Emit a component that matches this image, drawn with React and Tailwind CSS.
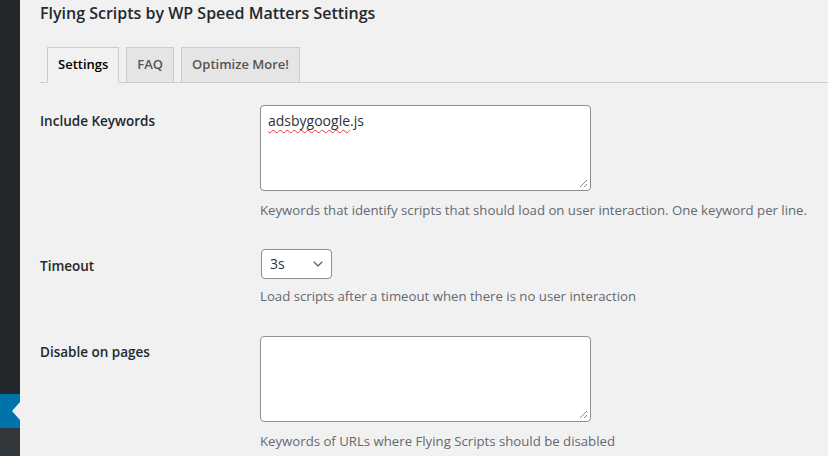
import { ChevronDown } from "lucide-react";

function Grip() {
  return (
    <svg className="absolute right-[2px] bottom-[2px]" width="9" height="9" viewBox="0 0 9 9">
      <path d="M8 1 L1 8 M8 5 L5 8" stroke="#8a8a8a" strokeWidth="1" />
    </svg>
  );
}

function FakeTextarea({ children }) {
  return (
    <div className="relative w-[331px] h-[86px] bg-white border border-[#8c8f94] rounded-[4px] px-[7px] pt-[4px] text-[14px] text-[#2c3338]">
      {children}
      <Grip />
    </div>
  );
}

function Row({ label, top, children, desc, descTop }) {
  return (
    <div className="flex">
      <div className="w-[220px] shrink-0 text-[13.5px] font-semibold text-[#23282d]" style={{ paddingTop: top }}>
        {label}
      </div>
      <div>
        {children}
        <p className="text-[13.2px] text-[#646970]" style={{ marginTop: descTop }}>
          {desc}
        </p>
      </div>
    </div>
  );
}

export default function App() {
  const tabs = ["Settings", "FAQ", "Optimize More!"];

  return (
    <div className="flex w-[828px] h-[456px] overflow-hidden bg-[#f1f1f1] font-['Open_Sans',sans-serif]">
      {/* admin menu strip */}
      <div className="w-[20px] shrink-0 flex flex-col">
        <div className="h-[394px] bg-[#23282d]" />
        <div className="relative h-[34px] bg-[#0073aa]">
          <div className="absolute right-0 top-[8px] w-0 h-0 border-y-[9px] border-y-transparent border-r-[8px] border-r-[#f1f1f1]" />
        </div>
        <div className="flex-1 bg-[#32373c]" />
      </div>

      <div className="flex-1 pl-[20px]">
        <h1 className="mt-[1px] text-[16px] leading-[24px] font-semibold text-[#23282d]">
          Flying Scripts by WP Speed Matters Settings
        </h1>

        {/* tabs */}
        <div className="mt-[22px] flex items-end gap-[7px] pl-[7px] border-b border-[#cccccc] h-[36px]">
          {tabs.map((t, i) => (
            <div
              key={t}
              className={
                i === 0
                  ? "h-[36px] -mb-px px-[10px] border border-[#cccccc] border-b-[#f1f1f1] bg-[#f1f1f1] text-[13px] font-semibold text-[#000] flex items-center"
                  : "h-[35px] px-[10px] border border-b-0 border-[#cccccc] bg-[#e5e5e5] text-[13px] font-semibold text-[#555] flex items-center"
              }
            >
              {t}
            </div>
          ))}
        </div>

        <div className="mt-[22px] flex flex-col">
          <Row label="Include Keywords" top={6} descTop={10} desc="Keywords that identify scripts that should load on user interaction. One keyword per line.">
            <FakeTextarea>
              <span className="underline decoration-wavy decoration-[#e0393e] decoration-1 underline-offset-[3px]">adsbygoogle</span>.js
            </FakeTextarea>
          </Row>

          <div className="mt-[28px]">
            <Row label="Timeout" top={7} descTop={8} desc="Load scripts after a timeout when there is no user interaction">
              <div className="ml-[1px] w-[71px] h-[30px] bg-white border border-[#8c8f94] rounded-[4px] flex items-center justify-between pl-[8px] pr-[5px] text-[14px] text-[#2c3338]">
                <span>3s</span>
                <ChevronDown size={16} strokeWidth={1.6} className="text-[#50575e]" />
              </div>
            </Row>
          </div>

          <div className="mt-[29px]">
            <Row label="Disable on pages" top={6} descTop={10} desc="Keywords of URLs where Flying Scripts should be disabled">
              <FakeTextarea />
            </Row>
          </div>
        </div>
      </div>
    </div>
  );
}
